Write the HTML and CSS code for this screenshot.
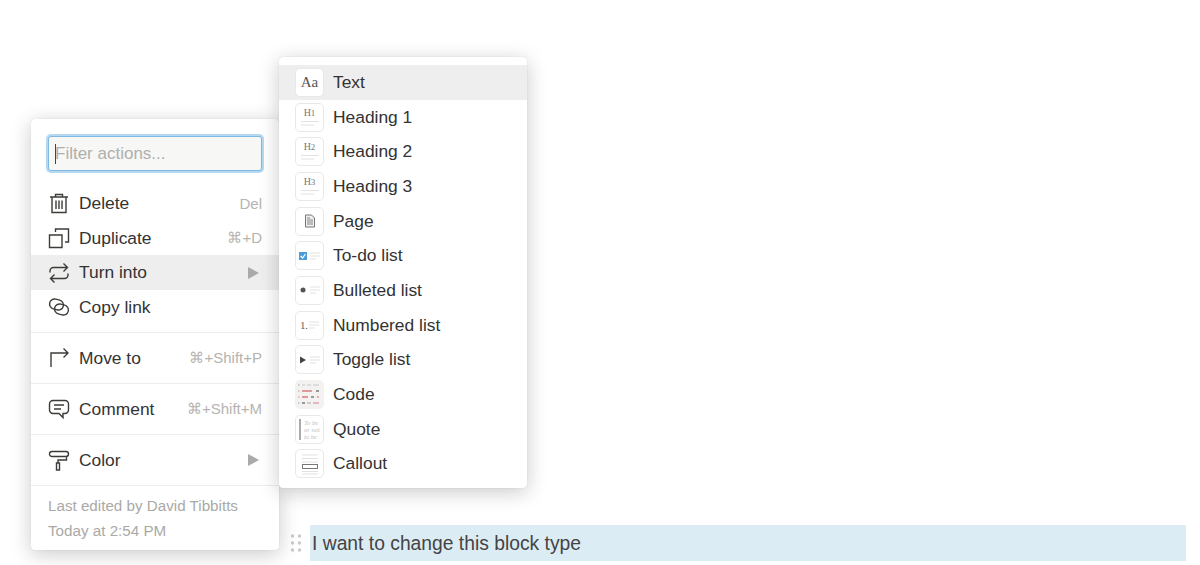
FILE: index.html
```html
<!DOCTYPE html>
<html lang="en">
<head>
  <meta charset="UTF-8">
  <title>Turn into</title>
  <link rel="stylesheet" href="styles.css">
</head>
<body>
  <div class="block-row">
    <svg class="handle" width="12" height="20" viewBox="0 0 12 20">
      <circle cx="2.5" cy="3" r="1.7"/><circle cx="9.5" cy="3" r="1.7"/>
      <circle cx="2.5" cy="10" r="1.7"/><circle cx="9.5" cy="10" r="1.7"/>
      <circle cx="2.5" cy="17" r="1.7"/><circle cx="9.5" cy="17" r="1.7"/>
    </svg>
    <div class="block-text">I want to change this block type</div>
  </div>

  <div class="menu actions">
    <div class="filter-wrap">
      <div class="filter"><span class="caret"></span><span class="placeholder">Filter actions...</span></div>
    </div>
    <div class="group first">
      <div class="row">
        <svg class="act-icon" viewBox="0 0 22 22"><path d="M2 5h18M7.500 5V2.500h7V5M4 5v15.500h14V5M8 8.500v8.500M11 8.500v8.500M14 8.500v8.500"/></svg>
        <span class="label">Delete</span><span class="hint">Del</span>
      </div>
      <div class="row">
        <svg class="act-icon" viewBox="0 0 22 22"><path d="M1.500 8h12.500v12.500H1.500zM7.500 5V2h13v13H17"/></svg>
        <span class="label">Duplicate</span><span class="hint">⌘+D</span>
      </div>
      <div class="row active">
        <svg class="act-icon" viewBox="0 0 22 22"><path d="M2 10.500V9a3.500 3.500 0 0 1 3.500-3.500h14M15.500 1.500l4 4-4 4M20 11.500V13a3.500 3.500 0 0 1-3.500 3.500h-14M6.500 12.500l-4 4 4 4"/></svg>
        <span class="label">Turn into</span><span class="arrow"></span>
      </div>
      <div class="row">
        <svg class="act-icon" viewBox="0 0 22 22"><rect x="1.500" y="3.500" width="14" height="10" rx="5" transform="rotate(15 8.500 8.500)"/><rect x="6.500" y="8.500" width="14" height="10" rx="5" transform="rotate(15 13.500 13.500)"/></svg>
        <span class="label">Copy link</span>
      </div>
    </div>
    <div class="group">
      <div class="row">
        <svg class="act-icon" viewBox="0 0 22 22"><path d="M3 20V6h17M15.500 1.500L20 6l-4.500 4.500"/></svg>
        <span class="label">Move to</span><span class="hint">⌘+Shift+P</span>
      </div>
    </div>
    <div class="group">
      <div class="row">
        <svg class="act-icon" viewBox="0 0 22 22"><path d="M5 2.500h12a3.500 3.500 0 0 1 3.500 3.500v6a3.500 3.500 0 0 1-3.500 3.500h-2v4l-4-4H5A3.500 3.500 0 0 1 1.500 12V6A3.500 3.500 0 0 1 5 2.500zM6 7h10M6 11h7"/></svg>
        <span class="label">Comment</span><span class="hint">⌘+Shift+M</span>
      </div>
    </div>
    <div class="group">
      <div class="row">
        <svg class="act-icon" viewBox="0 0 22 22"><path d="M4 2.500h14a2 2 0 0 1 0 5H4a2 2 0 0 1 0-5zM18.500 7.500V11H10v3M8.500 14h3v7h-3z"/></svg>
        <span class="label">Color</span><span class="arrow"></span>
      </div>
    </div>
    <div class="footer">
      <div>Last edited by David Tibbitts</div>
      <div>Today at 2:54 PM</div>
    </div>
  </div>

  <div class="menu types">
    <div class="row active">
      <span class="thumb aa">Aa</span><span class="label">Text</span>
    </div>
    <div class="row">
      <span class="thumb head"><b>H<i>1</i></b><svg width="20" height="8" viewBox="0 0 20 8"><path d="M1 1.500h18M1 5h13"/></svg></span><span class="label">Heading 1</span>
    </div>
    <div class="row">
      <span class="thumb head"><b>H<i>2</i></b><svg width="20" height="8" viewBox="0 0 20 8"><path d="M1 1.500h18M1 5h13"/></svg></span><span class="label">Heading 2</span>
    </div>
    <div class="row">
      <span class="thumb head"><b>H<i>3</i></b><svg width="20" height="8" viewBox="0 0 20 8"><path d="M1 1.500h18M1 5h13"/></svg></span><span class="label">Heading 3</span>
    </div>
    <div class="row">
      <span class="thumb">
        <svg width="12" height="14" viewBox="0 0 12 14"><path class="page" d="M1.500 1h6l3 3v9h-9z"/><path class="lines" d="M3 6h6M3 8h6M3 10h6M3 4h3"/></svg>
      </span><span class="label">Page</span>
    </div>
    <div class="row">
      <span class="thumb">
        <svg width="24" height="12" viewBox="0 0 24 12"><rect x="1" y="2" width="8" height="8" fill="#4a9bd6"/><path class="tick" d="M2.500 6l2 2 3-4"/><path class="lines" d="M12 3h10M12 6h10M12 9h6"/></svg>
      </span><span class="label">To-do list</span>
    </div>
    <div class="row">
      <span class="thumb">
        <svg width="24" height="12" viewBox="0 0 24 12"><circle cx="5" cy="6" r="2.500" fill="#555"/><path class="lines" d="M12 3h10M12 6h10M12 9h6"/></svg>
      </span><span class="label">Bulleted list</span>
    </div>
    <div class="row">
      <span class="thumb numbered"><b>1.</b><svg width="10" height="12" viewBox="0 0 10 12"><path class="lines" d="M0 3h10M0 6h10M0 9h6"/></svg></span><span class="label">Numbered list</span>
    </div>
    <div class="row">
      <span class="thumb">
        <svg width="24" height="12" viewBox="0 0 24 12"><path d="M2 2.500l6 3.500-6 3.500z" fill="#444"/><path class="lines" d="M12 3h10M12 6h10M12 9h6"/></svg>
      </span><span class="label">Toggle list</span>
    </div>
    <div class="row">
      <span class="thumb code">
        <svg width="29" height="29" viewBox="0 0 29 29">
          <rect x="3" y="4" width="1.500" height="2" fill="#ccc"/><rect x="7" y="4" width="3" height="2" fill="#ddd"/><rect x="12" y="4" width="4" height="2" fill="#ddd"/><rect x="18" y="4" width="6" height="2" fill="#ddd"/>
          <rect x="3" y="10" width="1.500" height="2" fill="#ccc"/><rect x="7" y="10" width="10" height="2" fill="#e09a9a"/><rect x="21" y="10" width="3" height="2" fill="#999"/>
          <rect x="3" y="16" width="1.500" height="2" fill="#ccc"/><rect x="7" y="16" width="6" height="2" fill="#e09a9a"/><rect x="16" y="16" width="3" height="2" fill="#999"/><rect x="22" y="16" width="2" height="2" fill="#e0b0b0"/>
          <rect x="3" y="22" width="1.500" height="2" fill="#ccc"/><rect x="7" y="22" width="3" height="2" fill="#999"/><rect x="12" y="22" width="4" height="2" fill="#ccc"/><rect x="18" y="22" width="6" height="2" fill="#e0b8c0"/>
        </svg>
      </span><span class="label">Code</span>
    </div>
    <div class="row">
      <span class="thumb quote"><em>To be<br>or not<br>to be</em></span><span class="label">Quote</span>
    </div>
    <div class="row">
      <span class="thumb">
        <svg width="22" height="24" viewBox="0 0 22 24"><path class="lines" d="M3 3h16M3 6.500h16M3 10h16M3 19.500h16M3 22h16"/><rect x="3.500" y="12.500" width="15" height="4" fill="none" stroke="#777"/></svg>
      </span><span class="label">Callout</span>
    </div>
  </div>
</body>
</html>
```

FILE: styles.css
```css
body { margin: 0; height: 565px; overflow: hidden; position: relative; background: #fff; font-family: "Liberation Sans", Arial, sans-serif; color: #333; }

.block-row { display: flex; align-items: center; padding: 525px 14px 0 290px; }
.handle { fill: #c9c9c7; margin-right: 8px; flex: none; }
.block-text { flex: 1; height: 36px; line-height: 38px; padding-left: 2px; background: #dcecf5; font-size: 19.300px; color: #444; }

.menu { position: absolute; width: 248px; background: #fff; border-radius: 4px; box-shadow: 0 0 1px rgba(15,15,15,.2), 0 4px 20px rgba(15,15,15,.22); box-sizing: border-box; }
.actions { left: 31px; top: 119px; height: 431px; }
.types { left: 279px; top: 57px; height: 431px; padding-top: 8px; }

.row { display: flex; align-items: center; height: 34.7px; font-size: 17.400px; }
.row.active { background: #eeeeee; }
.label { color: #333; }

.filter-wrap { padding: 17px 17px 15px; }
.filter { display: flex; align-items: center; height: 35px; box-sizing: border-box; padding: 1px 0 0 6px; background: #f7f7f6; border: 1px solid #7fb9e0; border-radius: 3px; box-shadow: 0 0 0 2px #b5d9f0; font-size: 17px; }
.caret { width: 1px; height: 20px; background: #444; }
.placeholder { color: #b0afac; margin-left: -1px; }

.group { padding: 8px 0 7.3px; border-bottom: 1px solid #ececeb; }
.group.first { padding-top: 0; }
.actions .row { padding: 0 17px; }
.act-icon { width: 22px; height: 22px; margin-right: 9px; flex: none; fill: none; stroke: #3d3c38; stroke-width: 1.4; }
.hint { margin-left: auto; font-size: 15px; color: #b5b4b1; }
.arrow { margin-left: auto; margin-right: 3px; width: 0; height: 0; border-left: 11px solid #aaa; border-top: 6.500px solid transparent; border-bottom: 6.500px solid transparent; }
.footer { padding: 7px 17px 0; font-size: 15.200px; line-height: 25px; color: #aaa9a6; }

.types .row { padding-left: 16px; }
.thumb { display: flex; align-items: center; justify-content: center; width: 29px; height: 29px; box-sizing: border-box; margin-right: 9px; flex: none; background: #fff; border: 1px solid #e8e8e7; border-radius: 5px; font-family: "Liberation Serif", serif; color: #555; overflow: hidden; }
.thumb svg { flex: none; }
.thumb.aa { font-size: 15px; }
.thumb.head { flex-direction: column; gap: 1px; color: #777; }
.thumb.head b { font-weight: normal; font-size: 10px; line-height: 11px; }
.thumb.head i { font-style: normal; font-size: 9px; }
.thumb.head path { stroke: #e2e2e1; fill: none; }
.lines { stroke: #e2e2e1; fill: none; }
.page { fill: #eee; stroke: #777; }
.page + .lines { stroke: #888; }
.tick { stroke: #fff; fill: none; stroke-width: 1.2; }
.thumb.numbered { gap: 1px; }
.thumb.numbered b { font-size: 10px; font-weight: normal; color: #555; }
.thumb.code { background: #f3f2f1; border: none; }
.thumb.quote { justify-content: flex-start; padding-left: 3px; }
.thumb.quote em { border-left: 2px solid #aaa; padding-left: 3px; font-size: 6.500px; line-height: 7px; color: #c2c2c0; white-space: nowrap; }
```
